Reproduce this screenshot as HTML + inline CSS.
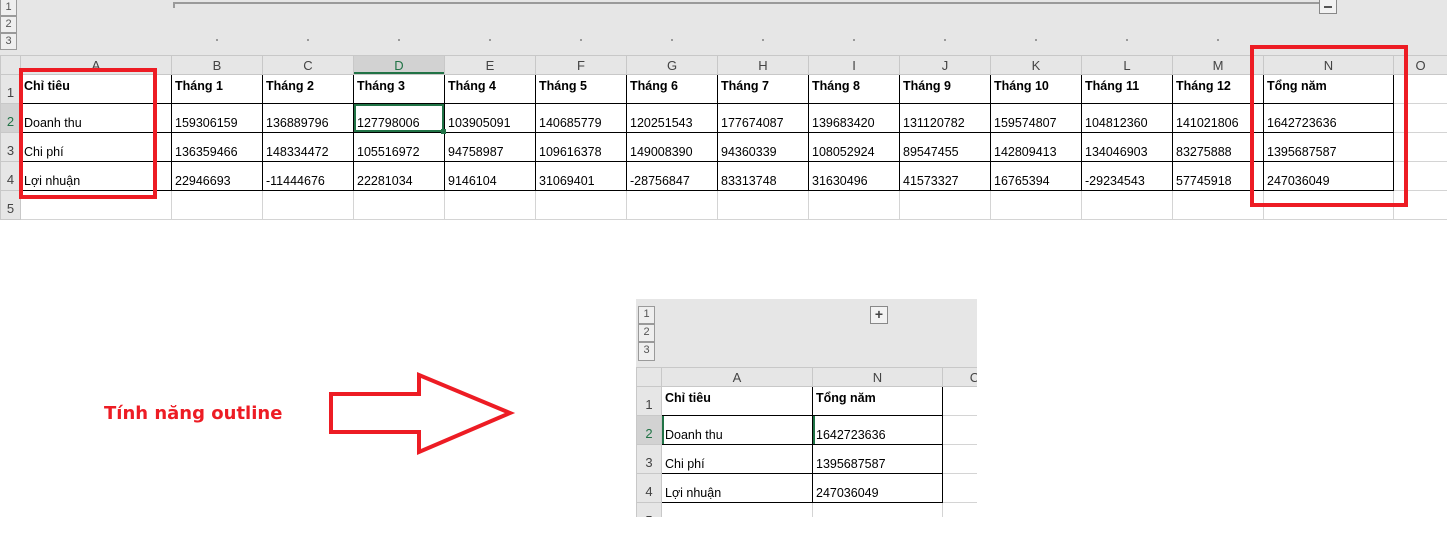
<!DOCTYPE html>
<html><head><meta charset="utf-8"><style>
*{margin:0;padding:0;box-sizing:border-box}
body{width:1447px;height:550px;background:#fff;position:relative;overflow:hidden;font-family:"Liberation Sans",Arial,sans-serif;}
.gray{position:absolute;background:#e6e6e6}
.lvl{position:absolute;width:17px;height:17px;border:1px solid #9a9a9a;background:#efefef;font-size:11px;color:#555;text-align:center;line-height:15px}
table{position:absolute;border-collapse:collapse;table-layout:fixed;font-size:12.5px;color:#000}
td{overflow:hidden;white-space:nowrap;padding:0 3px;border:1px solid #d4d4d4;height:29px;vertical-align:bottom;padding-bottom:2px}
tr.h td{height:19px;background:#e6e6e6;color:#444;text-align:center;vertical-align:middle;padding:0;font-size:13px;border-color:#c8c8c8}
td.rh{background:#e6e6e6;color:#444;text-align:center;padding:0 0 3px 0;border-color:#c8c8c8;font-size:13px}
tr.r1 td{vertical-align:top;padding-top:4px;font-weight:bold}
tr.r1 td.rh{font-weight:normal;vertical-align:bottom;padding-top:0}
td.b{border:1px solid #000}
.red{position:absolute;border:4px solid #ed1c24}
.dot{position:absolute;top:39px;width:2px;height:2px;background:#999}
</style></head><body>
<div class="gray" style="left:0;top:0;width:1447px;height:55px"></div>
<div class="lvl" style="left:0;top:-1px">1</div>
<div class="lvl" style="left:0;top:16px">2</div>
<div class="lvl" style="left:0;top:33px">3</div>
<div style="position:absolute;left:173px;top:2px;width:1146px;height:2px;background:#9a9a9a"></div>
<div style="position:absolute;left:173px;top:2px;width:2px;height:6px;background:#9a9a9a"></div>
<div style="position:absolute;left:1319px;top:-1px;width:18px;height:15px;border:1px solid #888;background:#f2f2f2"><div style="position:absolute;left:4px;top:6px;width:8px;height:2px;background:#555"></div></div>
<div class="dot" style="left:216px"></div><div class="dot" style="left:307px"></div><div class="dot" style="left:398px"></div><div class="dot" style="left:489px"></div><div class="dot" style="left:580px"></div><div class="dot" style="left:671px"></div><div class="dot" style="left:762px"></div><div class="dot" style="left:853px"></div><div class="dot" style="left:944px"></div><div class="dot" style="left:1035px"></div><div class="dot" style="left:1126px"></div><div class="dot" style="left:1217px"></div>

<table style="left:0;top:55px;width:1447px">
<colgroup><col style="width:20px"><col style="width:151px"><col style="width:91px"><col style="width:91px"><col style="width:91px"><col style="width:91px"><col style="width:91px"><col style="width:91px"><col style="width:91px"><col style="width:91px"><col style="width:91px"><col style="width:91px"><col style="width:91px"><col style="width:91px"><col style="width:130px"><col style="width:54px"></colgroup>
<tr class="h"><td></td><td>A</td><td>B</td><td>C</td><td style="background:#d2d2d2;color:#217346;box-shadow:inset 0 -2px 0 #217346">D</td><td>E</td><td>F</td><td>G</td><td>H</td><td>I</td><td>J</td><td>K</td><td>L</td><td>M</td><td>N</td><td>O</td></tr>
<tr class="r1"><td class="rh">1</td><td class="b">Chỉ tiêu</td><td class="b">Tháng 1</td><td class="b">Tháng 2</td><td class="b">Tháng 3</td><td class="b">Tháng 4</td><td class="b">Tháng 5</td><td class="b">Tháng 6</td><td class="b">Tháng 7</td><td class="b">Tháng 8</td><td class="b">Tháng 9</td><td class="b">Tháng 10</td><td class="b">Tháng 11</td><td class="b">Tháng 12</td><td class="b">Tổng năm</td><td></td></tr>
<tr><td class="rh" style="background:#d2d2d2;color:#217346">2</td><td class="b">Doanh thu</td><td class="b">159306159</td><td class="b">136889796</td><td class="b" style="box-shadow:inset 0 0 0 2px #217346">127798006</td><td class="b">103905091</td><td class="b">140685779</td><td class="b">120251543</td><td class="b">177674087</td><td class="b">139683420</td><td class="b">131120782</td><td class="b">159574807</td><td class="b">104812360</td><td class="b">141021806</td><td class="b">1642723636</td><td></td></tr>
<tr><td class="rh">3</td><td class="b">Chi phí</td><td class="b">136359466</td><td class="b">148334472</td><td class="b">105516972</td><td class="b">94758987</td><td class="b">109616378</td><td class="b">149008390</td><td class="b">94360339</td><td class="b">108052924</td><td class="b">89547455</td><td class="b">142809413</td><td class="b">134046903</td><td class="b">83275888</td><td class="b">1395687587</td><td></td></tr>
<tr><td class="rh">4</td><td class="b">Lợi nhuận</td><td class="b">22946693</td><td class="b">-11444676</td><td class="b">22281034</td><td class="b">9146104</td><td class="b">31069401</td><td class="b">-28756847</td><td class="b">83313748</td><td class="b">31630496</td><td class="b">41573327</td><td class="b">16765394</td><td class="b">-29234543</td><td class="b">57745918</td><td class="b">247036049</td><td></td></tr>
<tr><td class="rh">5</td><td></td><td></td><td></td><td></td><td></td><td></td><td></td><td></td><td></td><td></td><td></td><td></td><td></td><td></td><td></td></tr>
</table>
<div style="position:absolute;left:441px;top:129px;width:5px;height:5px;background:#217346"></div>
<div class="red" style="left:19px;top:68px;width:138px;height:131px"></div>
<div class="red" style="left:1250px;top:45px;width:158px;height:162px"></div>

<div style="position:absolute;left:104px;top:403px;color:#ed1c24;font-weight:bold;font-size:18px;font-family:'DejaVu Sans',sans-serif">Tính năng outline</div>
<svg style="position:absolute;left:0;top:0" width="1447" height="550"><polygon points="331,394 419,394 419,375 510,413 419,452 419,432 331,432" fill="none" stroke="#ed1c24" stroke-width="4"/></svg>

<div style="position:absolute;left:636px;top:299px;width:341px;height:218px;overflow:hidden;background:#fff">
<div class="gray" style="left:0;top:0;width:341px;height:68px"></div>
<div class="lvl" style="left:2px;top:7px;height:18px">1</div>
<div class="lvl" style="left:2px;top:25px;height:18px">2</div>
<div class="lvl" style="left:2px;top:43px;height:19px">3</div>
<div style="position:absolute;left:234px;top:7px;width:18px;height:18px;border:1px solid #888;background:#f2f2f2;font-size:14px;line-height:15px;text-align:center;color:#444;font-weight:bold">+</div>
<table style="left:0;top:68px;width:370px">
<colgroup><col style="width:25px"><col style="width:151px"><col style="width:130px"><col style="width:64px"></colgroup>
<tr class="h"><td></td><td>A</td><td>N</td><td>C</td></tr>
<tr class="r1"><td class="rh">1</td><td class="b" style="border-left-color:#d4d4d4">Chỉ tiêu</td><td class="b">Tổng năm</td><td></td></tr>
<tr><td class="rh" style="background:#d2d2d2;color:#217346">2</td><td class="b" style="box-shadow:inset 2px 0 0 #217346">Doanh thu</td><td class="b" style="box-shadow:inset 2px 0 0 #217346">1642723636</td><td></td></tr>
<tr><td class="rh">3</td><td class="b">Chi phí</td><td class="b">1395687587</td><td></td></tr>
<tr><td class="rh">4</td><td class="b">Lợi nhuận</td><td class="b">247036049</td><td></td></tr>
<tr><td class="rh">5</td><td></td><td></td><td></td></tr>
</table>
</div>
</body></html>
